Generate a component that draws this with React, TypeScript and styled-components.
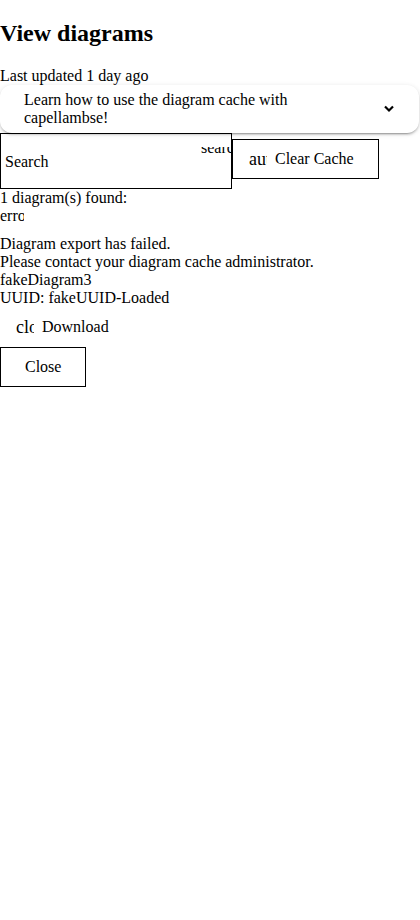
import styled, { createGlobalStyle } from "styled-components";

const GlobalStyle = createGlobalStyle`
  body {
    margin: 0;
    background: #fff;
    color: #000;
    font-family: "Liberation Serif", "Times New Roman", serif;
    font-size: 16px;
  }
`;

const Page = styled.div`
  display: flex;
  flex-direction: column;
  align-items: stretch;
`;

const Title = styled.h2`
  margin: 20px 0;
  font-size: 24px;
  font-weight: bold;
  line-height: normal;
`;

const Panel = styled.div`
  position: relative;
  z-index: 1;
  margin-right: 1px;
  background: #fff;
  border-radius: 12px;
  box-shadow: 0 3px 1px -2px rgba(0, 0, 0, 0.2), 0 2px 2px 0 rgba(0, 0, 0, 0.14),
    0 1px 5px 0 rgba(0, 0, 0, 0.12);
`;

const PanelHeader = styled.div`
  display: flex;
  align-items: center;
  justify-content: space-between;
  height: 48px;
  padding: 0 24px 0 24px;
`;

const PanelTitle = styled.span`
  max-width: 300px;
`;

const Toolbar = styled.div`
  display: flex;
  align-items: flex-start;
`;

const Field = styled.div`
  position: relative;
  box-sizing: border-box;
  width: 232px;
  height: 56px;
  padding: 2px 0 0 4px;
  border: 1px solid #000;
  display: flex;
  align-items: center;
  overflow: hidden;
`;

const SuffixIcon = styled.span`
  position: absolute;
  left: 200px;
  top: 13px;
  height: 7px;
  overflow: hidden;
  white-space: nowrap;
  line-height: 16px;

  & > span {
    display: block;
    margin-top: -7px;
  }
`;

const Button = styled.button<{ $outlined?: boolean; $icon?: boolean }>`
  box-sizing: border-box;
  height: 40px;
  display: inline-flex;
  align-items: center;
  padding: ${(p) => (p.$icon ? "0 24px 0 16px" : "0 24px")};
  border: ${(p) => (p.$outlined ? "1px solid #000" : "none")};
  border-radius: 0;
  background: ${(p) => (p.$outlined ? "#fff" : "transparent")};
  color: #000;
  font: inherit;
  cursor: pointer;
`;

const ClearButton = styled(Button)`
  margin-top: 6px;
`;

const ButtonIcon = styled.span`
  display: inline-block;
  width: 18px;
  margin-right: 8px;
  overflow: hidden;
  white-space: nowrap;
  font-size: 18px;
  line-height: 18px;
`;

const ErrorIcon = styled.div`
  width: 24px;
  height: 24px;
  overflow: hidden;
  white-space: nowrap;
`;

const Message = styled.div`
  margin-top: 4px;
`;

const Actions = styled.div`
  display: flex;
  flex-direction: column;
  align-items: flex-start;
`;

const Chevron = () => (
  <svg width="12" height="10" viewBox="0 0 12 10" aria-hidden="true">
    <polyline
      points="2,2.5 6,6.5 10,2.5"
      fill="none"
      stroke="#000"
      strokeWidth="2.2"
    />
  </svg>
);

const App = () => {
  return (
    <>
      <GlobalStyle />
      <Page>
        <Title>View diagrams</Title>
        <div>Last updated 1 day ago</div>
        <Panel>
          <PanelHeader>
            <PanelTitle>
              Learn how to use the diagram cache with capellambse!
            </PanelTitle>
            <Chevron />
          </PanelHeader>
        </Panel>
        <Toolbar>
          <Field>
            Search
            <SuffixIcon>
              <span>search</span>
            </SuffixIcon>
          </Field>
          <ClearButton $outlined $icon>
            <ButtonIcon>autorenew</ButtonIcon>
            Clear Cache
          </ClearButton>
        </Toolbar>
        <div>1 diagram(s) found:</div>
        <ErrorIcon>error</ErrorIcon>
        <Message>
          <div>Diagram export has failed.</div>
          <div>Please contact your diagram cache administrator.</div>
          <div>fakeDiagram3</div>
          <div>UUID: fakeUUID-Loaded</div>
        </Message>
        <Actions>
          <Button $icon>
            <ButtonIcon>cloud_download</ButtonIcon>
            Download
          </Button>
          <Button $outlined>Close</Button>
        </Actions>
      </Page>
    </>
  );
};

export default App;
